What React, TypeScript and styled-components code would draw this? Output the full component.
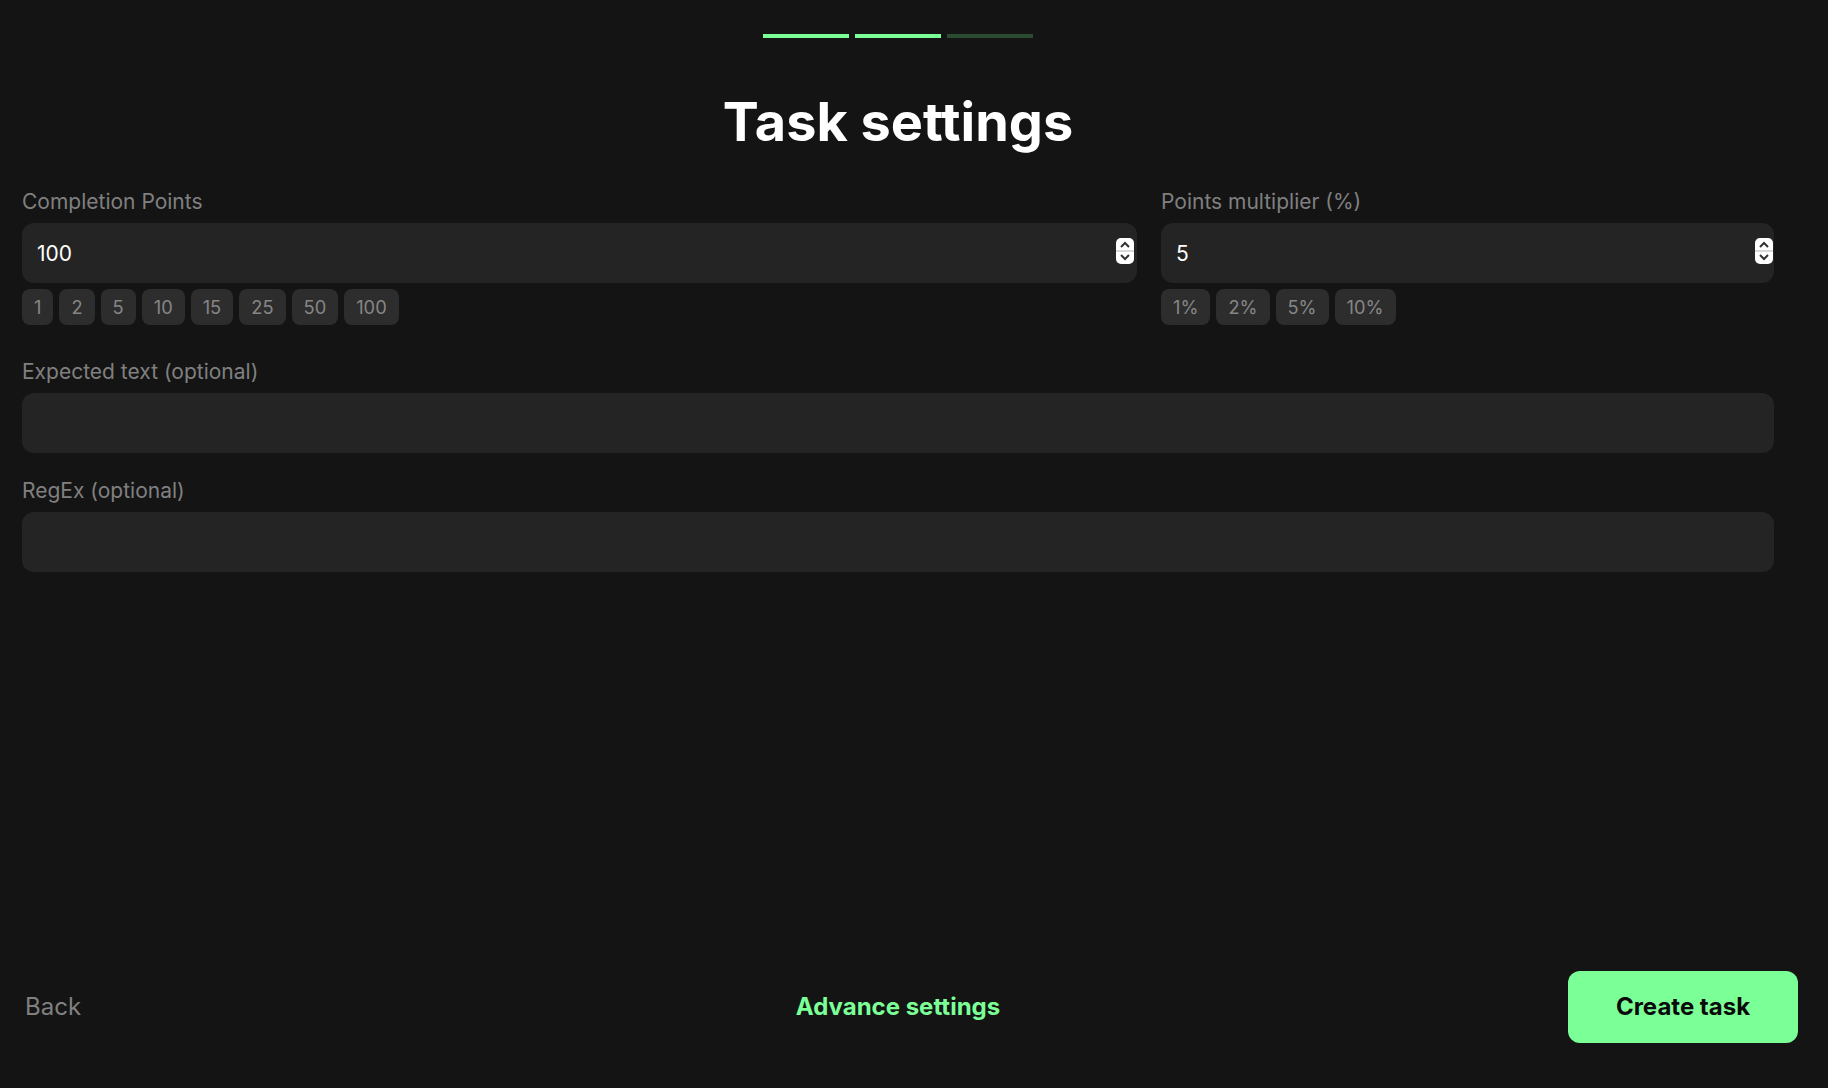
import React from 'react';
import styled, { createGlobalStyle } from 'styled-components';

const GlobalStyle = createGlobalStyle`
  html, body {
    margin: 0;
    padding: 0;
    height: 100%;
    background: #141414;
  }
  * {
    box-sizing: border-box;
  }
`;

const Page = styled.div`
  width: 1796px;
  height: 1088px;
  display: flex;
  flex-direction: column;
  align-items: center;
  background: #141414;
  font-family: Inter, "Liberation Sans", sans-serif;
  padding: 34px 0 45px;
`;

const Progress = styled.div`
  display: flex;
  gap: 6px;
`;

const Step = styled.div<{ $done: boolean }>`
  width: 86px;
  height: 4px;
  background: ${({ $done }) => ($done ? '#7bff97' : '#2a4a32')};
`;

const Title = styled.h1`
  margin: 50px 0 0;
  color: #fff;
  font-size: 54px;
  line-height: 68px;
  font-weight: 700;
  text-align: center;
`;

const Form = styled.div`
  width: 1752px;
  margin-top: 34px;
  display: flex;
  flex-direction: column;
  gap: 26px;
`;

const Row = styled.div`
  display: flex;
  gap: 24px;
  padding-bottom: 9px;
`;

const Field = styled.div<{ $grow?: number }>`
  flex: ${({ $grow }) => $grow ?? 'none'};
  min-width: 0;
`;

const Label = styled.label`
  display: block;
  color: #808080;
  font-size: 21px;
  line-height: 24px;
  margin-bottom: 9px;
`;

const InputWrap = styled.div`
  position: relative;
`;

const Input = styled.input`
  display: block;
  width: 100%;
  height: 60px;
  border: none;
  outline: none;
  border-radius: 12px;
  background: #242424;
  color: #fff;
  font-family: inherit;
  font-size: 21px;
  padding: 0 24px 0 15px;

  &::-webkit-inner-spin-button,
  &::-webkit-outer-spin-button {
    -webkit-appearance: none;
    margin: 0;
  }
`;

const Spinner = styled.div<{ $right: number }>`
  position: absolute;
  top: 15px;
  right: ${({ $right }) => $right}px;
  width: 18px;
  height: 26px;
  border-radius: 5px;
  background: #fff;
  overflow: hidden;
  display: flex;
  flex-direction: column;
  gap: 2px;
  background-image: linear-gradient(#d8d8d8, #d8d8d8);
  background-repeat: no-repeat;
  background-size: 100% 2px;
  background-position: 0 12px;
`;

const SpinIcon = styled.svg`
  display: block;
  width: 18px;
  height: 12px;
  flex: none;
`;

const Chips = styled.div`
  display: flex;
  gap: 6px;
  margin-top: 6px;
`;

const Chip = styled.button`
  height: 36px;
  padding: 0 12px;
  border: none;
  border-radius: 8px;
  background: #2d2d2d;
  color: #868686;
  font-family: inherit;
  font-size: 18.3px;
`;

const Footer = styled.div`
  margin-top: auto;
  width: 100%;
  display: grid;
  grid-template-columns: 1fr auto 1fr;
  align-items: center;
`;

const BackButton = styled.button`
  justify-self: start;
  border: none;
  background: none;
  padding: 0 0 2px 25px;
  color: #808080;
  font-family: inherit;
  font-size: 24px;
`;

const AdvanceButton = styled.button`
  border: none;
  background: none;
  padding: 0 0 2px;
  color: #7bff97;
  font-family: inherit;
  font-size: 24px;
  font-weight: 700;
`;

const CreateButton = styled.button`
  justify-self: end;
  width: 230px;
  height: 72px;
  margin-right: -2px;
  padding: 0 0 2px;
  border: none;
  border-radius: 12px;
  background: #7bff97;
  color: #0a0a0a;
  font-family: inherit;
  font-size: 24px;
  font-weight: 700;
`;

const pointChips = ['1', '2', '5', '10', '15', '25', '50', '100'];
const multiplierChips = ['1%', '2%', '5%', '10%'];

function NumberInput({ value, right }: { value: number; right: number }) {
  return (
    <InputWrap>
      <Input type="number" defaultValue={value} />
      <Spinner $right={right}>
        <SpinIcon viewBox="0 0 18 12">
          <path d="M5 9l4-4 4 4" fill="none" stroke="#333" strokeWidth="2" />
        </SpinIcon>
        <SpinIcon viewBox="0 0 18 12">
          <path d="M5 3l4 4 4-4" fill="none" stroke="#333" strokeWidth="2" />
        </SpinIcon>
      </Spinner>
    </InputWrap>
  );
}

export default function App() {
  return (
    <>
      <GlobalStyle />
      <Page>
        <Progress>
          <Step $done />
          <Step $done />
          <Step $done={false} />
        </Progress>
        <Title>Task settings</Title>
        <Form>
          <Row>
            <Field $grow={1115}>
              <Label>Completion Points</Label>
              <NumberInput value={100} right={3} />
              <Chips>
                {pointChips.map((c) => (
                  <Chip key={c}>{c}</Chip>
                ))}
              </Chips>
            </Field>
            <Field $grow={613}>
              <Label>Points multiplier (%)</Label>
              <NumberInput value={5} right={1} />
              <Chips>
                {multiplierChips.map((c) => (
                  <Chip key={c}>{c}</Chip>
                ))}
              </Chips>
            </Field>
          </Row>
          <Field>
            <Label>Expected text (optional)</Label>
            <Input type="text" />
          </Field>
          <Field>
            <Label>RegEx (optional)</Label>
            <Input type="text" />
          </Field>
        </Form>
        <Footer>
          <BackButton>Back</BackButton>
          <AdvanceButton>Advance settings</AdvanceButton>
          <CreateButton>Create task</CreateButton>
        </Footer>
      </Page>
    </>
  );
}
